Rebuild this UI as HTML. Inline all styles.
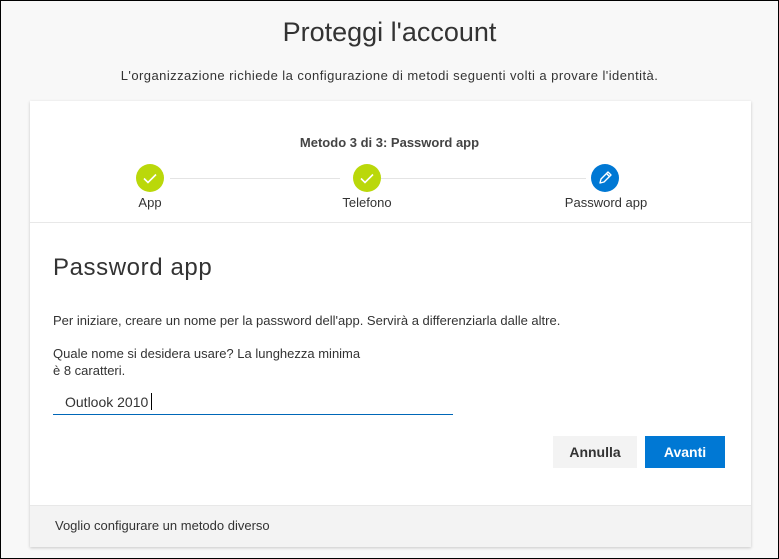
<!DOCTYPE html>
<html><head><style>
*{margin:0;padding:0;box-sizing:border-box}
body{width:779px;height:559px;background:#f8f8f8;font-family:"Liberation Sans",sans-serif;color:#333;position:relative;overflow:hidden}
.frame{position:absolute;left:0;top:0;width:779px;height:559px;border:1px solid #000}
.abs{position:absolute;white-space:nowrap}
.card{position:absolute;left:30px;top:101px;width:721px;height:446px;background:#fff;box-shadow:0 1px 3px rgba(0,0,0,.2)}
.circ{position:absolute;width:28px;height:28px;border-radius:50%;top:164px}
.line{position:absolute;top:178px;height:1px;background:#e4e4e4}
.lbl{position:absolute;top:195px;font-size:13px;transform:translateX(-50%);white-space:nowrap}
</style></head><body>
<div class="abs" style="left:0;width:779px;text-align:center;top:17px;font-size:27px;color:#333">Proteggi l'account</div>
<div class="abs" style="left:0;width:779px;text-align:center;top:68px;font-size:13px;letter-spacing:0.45px">L'organizzazione richiede la configurazione di metodi seguenti volti a provare l'identità.</div>
<div class="card"></div>
<div class="abs" style="left:0;width:779px;text-align:center;top:135px;font-size:13px;font-weight:bold;color:#444">Metodo 3 di 3: Password app</div>
<div class="line" style="left:170px;width:170px"></div>
<div class="line" style="left:381px;width:205px"></div>
<div class="circ" style="left:136px;background:#bad80a"><svg width="28" height="28"><path d="M8 14.5l4 4 8-8" stroke="#fff" stroke-width="1.6" fill="none"/></svg></div>
<div class="circ" style="left:353px;background:#bad80a"><svg width="28" height="28"><path d="M8 14.5l4 4 8-8" stroke="#fff" stroke-width="1.6" fill="none"/></svg></div>
<div class="circ" style="left:591px;background:#0078d4"><svg width="28" height="28"><path d="M9 19l1-4 7-7 3 3-7 7z M15.5 9.5l3 3" stroke="#fff" stroke-width="1.4" fill="none" stroke-linejoin="round"/></svg></div>
<div class="lbl" style="left:150px">App</div>
<div class="lbl" style="left:367px">Telefono</div>
<div class="lbl" style="left:606px">Password app</div>
<div class="abs" style="left:30px;top:222px;width:721px;height:1px;background:#e8e8e8"></div>
<div class="abs" style="left:53px;top:254px;font-size:24px;font-weight:300;color:#333;letter-spacing:0.6px">Password app</div>
<div class="abs" style="left:53px;top:313px;font-size:13px">Per iniziare, creare un nome per la password dell'app. Servirà a differenziarla dalle altre.</div>
<div class="abs" style="left:53px;top:346px;font-size:13px">Quale nome si desidera usare? La lunghezza minima</div>
<div class="abs" style="left:53px;top:363px;font-size:13px">è 8 caratteri.</div>
<div class="abs" style="left:65px;top:393px;font-size:14px">Outlook 2010<span style="display:inline-block;width:1px;height:17px;background:#000;vertical-align:-3px;margin-left:3px"></span></div>
<div class="abs" style="left:53px;top:414px;width:400px;height:1px;background:#0067b8"></div>
<div class="abs" style="left:553px;top:436px;width:84px;height:32px;background:#f3f3f3;font-size:14px;font-weight:bold;text-align:center;line-height:32px">Annulla</div>
<div class="abs" style="left:645px;top:436px;width:80px;height:32px;background:#0078d4;color:#fff;font-size:14px;font-weight:bold;text-align:center;line-height:32px">Avanti</div>
<div class="abs" style="left:30px;top:505px;width:721px;height:42px;background:#f3f3f3;border-top:1px solid #e8e8e8"></div>
<div class="abs" style="left:55px;top:518px;font-size:13px">Voglio configurare un metodo diverso</div>
<div class="frame"></div>
</body></html>
